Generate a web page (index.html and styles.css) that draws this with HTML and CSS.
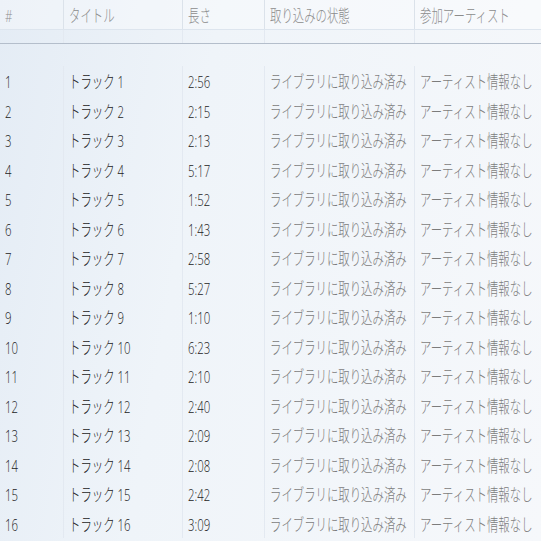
FILE: index.html
```html
<!DOCTYPE html>
<html lang="ja">
<head>
    <meta charset="UTF-8">
    <title>トラック一覧</title>
    <link rel="stylesheet" href="styles.css">
</head>
<body>
    <div class="track-list">
        <div class="row head">
            <div class="cell"><span>#</span></div>
            <div class="cell"><span>タイトル</span></div>
            <div class="cell"><span>長さ</span></div>
            <div class="cell"><span>取り込みの状態</span></div>
            <div class="cell"><span>参加アーティスト</span></div>
        </div>
        <div class="row filter">
            <div class="cell"></div><div class="cell"></div><div class="cell"></div><div class="cell"></div><div class="cell"></div>
        </div>
        <div class="rows">
            <div class="row"><div class="cell"><span>1</span></div><div class="cell"><span>トラック 1</span></div><div class="cell"><span>2:56</span></div><div class="cell dim"><span>ライブラリに取り込み済み</span></div><div class="cell dim"><span>アーティスト情報なし</span></div></div>
            <div class="row"><div class="cell"><span>2</span></div><div class="cell"><span>トラック 2</span></div><div class="cell"><span>2:15</span></div><div class="cell dim"><span>ライブラリに取り込み済み</span></div><div class="cell dim"><span>アーティスト情報なし</span></div></div>
            <div class="row"><div class="cell"><span>3</span></div><div class="cell"><span>トラック 3</span></div><div class="cell"><span>2:13</span></div><div class="cell dim"><span>ライブラリに取り込み済み</span></div><div class="cell dim"><span>アーティスト情報なし</span></div></div>
            <div class="row"><div class="cell"><span>4</span></div><div class="cell"><span>トラック 4</span></div><div class="cell"><span>5:17</span></div><div class="cell dim"><span>ライブラリに取り込み済み</span></div><div class="cell dim"><span>アーティスト情報なし</span></div></div>
            <div class="row"><div class="cell"><span>5</span></div><div class="cell"><span>トラック 5</span></div><div class="cell"><span>1:52</span></div><div class="cell dim"><span>ライブラリに取り込み済み</span></div><div class="cell dim"><span>アーティスト情報なし</span></div></div>
            <div class="row"><div class="cell"><span>6</span></div><div class="cell"><span>トラック 6</span></div><div class="cell"><span>1:43</span></div><div class="cell dim"><span>ライブラリに取り込み済み</span></div><div class="cell dim"><span>アーティスト情報なし</span></div></div>
            <div class="row"><div class="cell"><span>7</span></div><div class="cell"><span>トラック 7</span></div><div class="cell"><span>2:58</span></div><div class="cell dim"><span>ライブラリに取り込み済み</span></div><div class="cell dim"><span>アーティスト情報なし</span></div></div>
            <div class="row"><div class="cell"><span>8</span></div><div class="cell"><span>トラック 8</span></div><div class="cell"><span>5:27</span></div><div class="cell dim"><span>ライブラリに取り込み済み</span></div><div class="cell dim"><span>アーティスト情報なし</span></div></div>
            <div class="row"><div class="cell"><span>9</span></div><div class="cell"><span>トラック 9</span></div><div class="cell"><span>1:10</span></div><div class="cell dim"><span>ライブラリに取り込み済み</span></div><div class="cell dim"><span>アーティスト情報なし</span></div></div>
            <div class="row"><div class="cell"><span>10</span></div><div class="cell"><span>トラック 10</span></div><div class="cell"><span>6:23</span></div><div class="cell dim"><span>ライブラリに取り込み済み</span></div><div class="cell dim"><span>アーティスト情報なし</span></div></div>
            <div class="row"><div class="cell"><span>11</span></div><div class="cell"><span>トラック 11</span></div><div class="cell"><span>2:10</span></div><div class="cell dim"><span>ライブラリに取り込み済み</span></div><div class="cell dim"><span>アーティスト情報なし</span></div></div>
            <div class="row"><div class="cell"><span>12</span></div><div class="cell"><span>トラック 12</span></div><div class="cell"><span>2:40</span></div><div class="cell dim"><span>ライブラリに取り込み済み</span></div><div class="cell dim"><span>アーティスト情報なし</span></div></div>
            <div class="row"><div class="cell"><span>13</span></div><div class="cell"><span>トラック 13</span></div><div class="cell"><span>2:09</span></div><div class="cell dim"><span>ライブラリに取り込み済み</span></div><div class="cell dim"><span>アーティスト情報なし</span></div></div>
            <div class="row"><div class="cell"><span>14</span></div><div class="cell"><span>トラック 14</span></div><div class="cell"><span>2:08</span></div><div class="cell dim"><span>ライブラリに取り込み済み</span></div><div class="cell dim"><span>アーティスト情報なし</span></div></div>
            <div class="row"><div class="cell"><span>15</span></div><div class="cell"><span>トラック 15</span></div><div class="cell"><span>2:42</span></div><div class="cell dim"><span>ライブラリに取り込み済み</span></div><div class="cell dim"><span>アーティスト情報なし</span></div></div>
            <div class="row"><div class="cell"><span>16</span></div><div class="cell"><span>トラック 16</span></div><div class="cell"><span>3:09</span></div><div class="cell dim"><span>ライブラリに取り込み済み</span></div><div class="cell dim"><span>アーティスト情報なし</span></div></div>
        </div>
    </div>
</body>
</html>
```

FILE: styles.css
```css
body {
    margin: 0;
    font-family: "Open Sans", "Noto Sans CJK JP", sans-serif;
    font-size: 17px;
    font-weight: 300;
    color: #1b1b1b;
    background: linear-gradient(100deg, #e4ecf5 0%, #eff4f9 35%, #f6f8fb 100%);
    height: 541px;
    overflow: hidden;
}

.track-list {
    width: 541px;
}

.row {
    display: grid;
    grid-template-columns: 64px 119px 82px 150px 126px;
    height: 29.5px;
}

.cell {
    border-right: 1px solid #e3e9f1;
    padding: 2px 0 0 5px;
    overflow: hidden;
    white-space: nowrap;
    line-height: 27.5px;
}

.cell:last-child {
    border-right: none;
}

.cell span {
    display: inline-block;
    transform: scaleX(0.67);
    transform-origin: 0 50%;
}

.head {
    height: 29px;
    border-bottom: 1px solid #dde5ee;
    color: #8c8c8c;
    background: rgba(255, 255, 255, 0.35);
}

.head .cell {
    line-height: 27px;
    border-right-color: #dbe2ea;
}

.filter {
    height: 13px;
    border-bottom: 1px solid #b4becb;
}

.filter .cell {
    padding: 0;
}

.rows {
    padding-top: 22px;
}

.dim {
    color: #7c7c7c;
}
```
